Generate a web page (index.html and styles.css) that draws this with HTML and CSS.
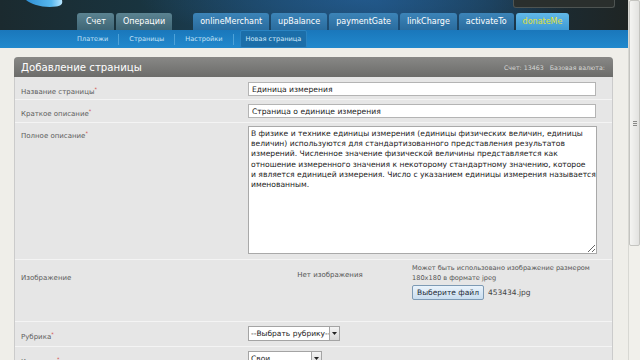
FILE: index.html
```html
<!DOCTYPE html>
<html lang="ru">
<head>
<meta charset="utf-8">
<title>Добавление страницы</title>
<link rel="stylesheet" href="styles.css">
</head>
<body>
<div class="page">
  <header class="masthead">
    <div class="mast-top">
      <svg class="logo" width="38" height="8" viewBox="0 0 38 8">
        <defs>
          <linearGradient id="lg" x1="0" y1="0" x2="1" y2="0">
            <stop offset="0" stop-color="#2f8fd4"/>
            <stop offset="0.7" stop-color="#58b8ee"/>
            <stop offset="1" stop-color="#b9e6ff"/>
          </linearGradient>
        </defs>
        <path d="M0 0 C6 5 18 8 30 6.5 C35 6 37 4 36 0 Z" fill="url(#lg)"/>
      </svg>
      <div class="userbox"></div>
    </div>
    <nav class="tabs">
      <a class="tab grey">Счет</a>
      <a class="tab grey">Операции</a>
      <a class="tab gap">onlineMerchant</a>
      <a class="tab">upBalance</a>
      <a class="tab">paymentGate</a>
      <a class="tab">linkCharge</a>
      <a class="tab">activateTo</a>
      <a class="tab donate">donateMe</a>
    </nav>
  </header>
  <nav class="subnav">
    <a class="sub">Платежи</a><span class="sep"></span>
    <a class="sub">Страницы</a><span class="sep"></span>
    <a class="sub">Настройки</a><span class="sep"></span>
    <a class="sub active">Новая страница</a>
  </nav>
  <main class="content">
    <section class="panel">
      <div class="panel-head">
        <h1>Добавление страницы</h1>
        <span class="meta">Счет: 13463&nbsp;&nbsp; Базовая валюта:</span>
      </div>
      <div class="row row-input">
        <div class="label">Название страницы<sup class="req">*</sup></div>
        <div class="field"><input class="text" type="text" value="Единица измерения"></div>
      </div>
      <div class="row row-input">
        <div class="label">Краткое описание<sup class="req">*</sup></div>
        <div class="field"><input class="text" type="text" value="Страница о единице измерения"></div>
      </div>
      <div class="row row-area">
        <div class="label">Полное описание<sup class="req">*</sup></div>
        <div class="field"><textarea class="area" wrap="off">В физике и технике единицы измерения (единицы физических величин, единицы
величин) используются для стандартизованного представления результатов
измерений. Численное значение физической величины представляется как
отношение измеренного значения к некоторому стандартному значению, которое
и является единицей измерения. Число с указанием единицы измерения называется
именованным.</textarea></div>
      </div>
      <div class="row row-image">
        <div class="label">Изображение</div>
        <div class="image-field">
          <div class="no-image">Нет изображения</div>
          <div class="upload">
            <p class="hint">Может быть использовано изображение размером<br>180x180 в формате jpeg</p>
            <div class="file"><button class="file-btn" type="button">Выберите файл</button><span class="file-name">453434.jpg</span></div>
          </div>
        </div>
      </div>
      <div class="row row-select">
        <div class="label">Рубрика<sup class="req">*</sup></div>
        <div class="field"><div class="select"><span class="select-val">--Выбрать рубрику--</span><span class="select-arrow"><svg width="5" height="3" viewBox="0 0 5 3"><path d="M0 0H5L2.5 3Z" fill="#222"/></svg></span></div></div>
      </div>
      <div class="row row-select">
        <div class="label">Контакты<sup class="req">*</sup></div>
        <div class="field"><div class="select select-short"><span class="select-val">Свои...</span><span class="select-arrow"><svg width="5" height="3" viewBox="0 0 5 3"><path d="M0 0H5L2.5 3Z" fill="#222"/></svg></span></div></div>
      </div>
    </section>
  </main>
</div>
<div class="scrollbar">
  <div class="thumb"><span class="grip"></span></div>
</div>
</body>
</html>
```
FILE: styles.css
```css
html, body {
  margin: 0;
  height: 360px;
  overflow: hidden;
}
body {
  display: flex;
  font-family: "DejaVu Sans", Verdana, sans-serif;
  background: #efeee9;
}
.page {
  flex: 1;
  min-width: 0;
  display: flex;
  flex-direction: column;
}
.scrollbar {
  width: 11px;
  flex: none;
  display: flex;
  flex-direction: column;
  background: #f1f0eb;
  border-left: 1px solid #d8d8d3;
}
.thumb {
  height: 244px;
  background: linear-gradient(90deg, #f4f4f2, #e2e2e0);
  border: 1px solid #c4c4c0;
  border-radius: 2px;
  display: flex;
  align-items: center;
  justify-content: center;
}
.grip {
  width: 4px;
  height: 5px;
  border-top: 1px solid #8a8a88;
  border-bottom: 1px solid #8a8a88;
  box-sizing: border-box;
  background: linear-gradient(#8a8a88, #8a8a88) 0 1px / 100% 1px no-repeat;
}

/* header */
.masthead {
  height: 30px;
  display: flex;
  flex-direction: column;
  background:
    radial-gradient(ellipse 220px 40px at 360px 0, rgba(40, 100, 160, 0.55), transparent),
    linear-gradient(90deg, #1b2a2f 0%, #19343f 22%, #1a4360 45%, #1b4a70 60%, #1a3a50 78%, #1c2a30 90%, #1f2524 100%);
}
.mast-top {
  height: 13px;
  display: flex;
  align-items: flex-start;
}
.logo {
  margin-left: 26px;
  display: block;
}
.userbox {
  margin-left: auto;
  margin-right: 13px;
  width: 100px;
  height: 7px;
  background: #2a2f2d;
  border: 1px solid #4e5452;
  border-top: none;
  border-radius: 0 0 3px 3px;
}
.tabs {
  display: flex;
  gap: 2px;
  padding-left: 77px;
  height: 17px;
}
.tab {
  height: 17px;
  padding: 0 7px;
  display: flex;
  align-items: center;
  font-size: 8px;
  color: #fff;
  border-radius: 3px 3px 0 0;
  background: linear-gradient(#3c84b8, #2a6c9e);
}
.tab.grey {
  background: linear-gradient(#5b8391, #3f6676);
}
.tab.grey:first-child {
  padding: 0 8px 0 9px;
}
.tab.gap {
  margin-left: 19px;
}
.tab.donate {
  background: linear-gradient(#62b8e8, #3d9ad4);
  color: #e2e03a;
}

/* sub navigation */
.subnav {
  height: 23px;
  display: flex;
  align-items: center;
  padding-left: 72px;
  background: linear-gradient(#1a77bb, #2189cd);
  font-size: 6.6px;
  color: #c2e2f7;
}
.sub {
  padding: 0 5px;
}
.sep {
  width: 1px;
  height: 11px;
  margin: 0 5px;
  background: #4ea2d8;
}
.sub.active {
  margin-left: 1px;
  padding: 4px 5px;
  background: #1b6ea9;
  border: 1px solid #2b84c2;
  border-radius: 2px;
  color: #d2eafa;
}

/* content */
.content {
  padding: 9px 0 0 14px;
}
.panel {
  width: 599px;
  box-sizing: border-box;
  background: #e6e6e6;
  border: 1px solid #cbcbcb;
  border-top: none;
  border-radius: 4px 4px 0 0;
}
.panel-head {
  height: 20px;
  margin: 0 -1px 1px;
  display: flex;
  align-items: center;
  justify-content: space-between;
  padding: 0 8px 0 7px;
  border-radius: 4px 4px 0 0;
  background: linear-gradient(#888886, #6c6c6a);
  color: #fff;
}
.panel-head h1 {
  margin: 0;
  font-size: 10.2px;
  font-weight: normal;
}
.meta {
  font-size: 6.3px;
  color: #d6d6d4;
}
.row {
  display: grid;
  grid-template-columns: 233px 348px;
  padding: 3px 0;
  border-bottom: 1px solid #f4f4f4;
}
.row-input {
  padding: 4px 0 3px;
}
.label {
  padding: 4px 0 0 6px;
  font-size: 7px;
  color: #5c5c5c;
}
.req {
  color: #d24a4a;
  font-size: 5px;
}
.text {
  display: block;
  width: 348px;
  height: 14px;
  box-sizing: border-box;
  margin: 0;
  padding: 0 3px;
  border: 1px solid #b4b4b4;
  background: #fff;
  font-family: "DejaVu Sans", Verdana, sans-serif;
  font-size: 7.6px;
  color: #222;
}
.row-area {
  padding-bottom: 5px;
}
.area {
  display: block;
  width: 349px;
  height: 128px;
  box-sizing: border-box;
  margin: 0;
  padding: 2px 2px;
  border: 1px solid #a9a9a9;
  background: #fff;
  font-family: "DejaVu Sans", Verdana, sans-serif;
  font-size: 7.6px;
  line-height: 10.3px;
  color: #222;
  white-space: pre;
  overflow: hidden;
}
.row-image {
  padding: 3px 0 21px;
}
.row-image .label {
  padding-top: 11px;
}
.image-field {
  display: flex;
}
.no-image {
  width: 164px;
  flex: none;
  padding-top: 8px;
  text-align: center;
  font-size: 7px;
  color: #555;
}
.upload {
  flex: none;
  display: flex;
  flex-direction: column;
}
.hint {
  margin: 0 0 2px;
  font-size: 6.6px;
  line-height: 10px;
  color: #555;
  white-space: nowrap;
}
.file {
  display: flex;
  align-items: center;
  gap: 4px;
}
.file-btn {
  margin: 0;
  height: 15px;
  padding: 0 4px;
  border: 1px solid #7d9ab4;
  border-radius: 2px;
  background: linear-gradient(#eaf3fb, #c9ddef);
  font-family: "DejaVu Sans", Verdana, sans-serif;
  font-size: 7.5px;
  color: #1d2a36;
}
.file-name {
  font-size: 7.5px;
  color: #444;
}
.row-select {
  padding: 4px 0 5px;
}
.row-select .label {
  padding-top: 5px;
}
.select {
  display: flex;
  align-items: center;
  width: 92px;
  height: 15px;
  box-sizing: border-box;
  border: 1px solid #a4a4a4;
  background: #fff;
  font-size: 7.5px;
  color: #222;
}
.select-short {
  width: 74px;
}
.select-val {
  flex: 1;
  padding-left: 2px;
  white-space: nowrap;
  overflow: hidden;
}
.select-arrow {
  width: 9px;
  height: 13px;
  display: flex;
  align-items: center;
  justify-content: center;
  border-left: 1px solid #a4a4a4;
  background: linear-gradient(#f4f4f4, #d8d8d8);
}
```
